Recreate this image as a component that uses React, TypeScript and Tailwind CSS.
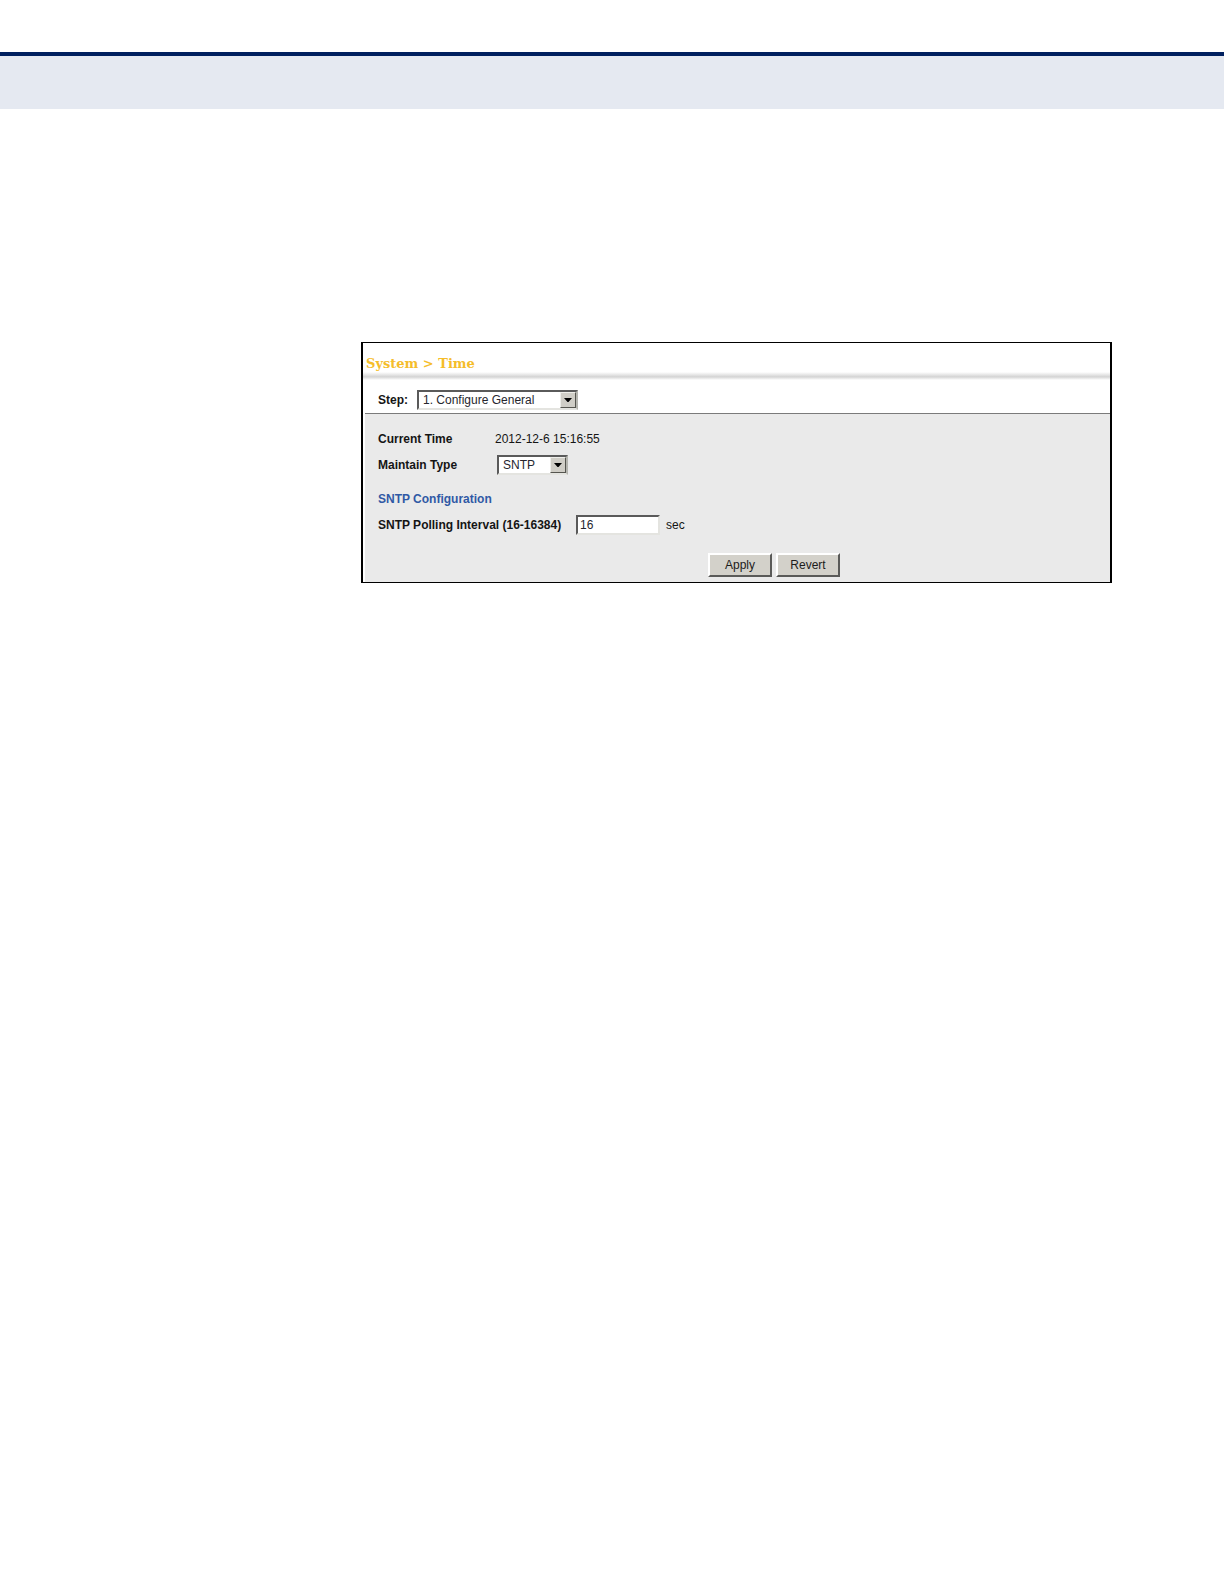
import type { ReactNode } from "react";

type ClassicSelectProps = {
  id: string;
  widthClass: string;
  options: string[];
};

function ClassicSelect({ id, widthClass, options }: ClassicSelectProps) {
  return (
    <div
      className={`relative h-5 border-2 border-t-[#5a5a5a] border-l-[#5a5a5a] border-r-[#b4b4ae] border-b-[#e4e4e0] bg-white ${widthClass}`}
    >
      <select
        id={id}
        className="block h-full w-full appearance-none bg-transparent pl-1 text-[12px] leading-4 text-[#26262e] outline-none"
      >
        {options.map((option) => (
          <option key={option}>{option}</option>
        ))}
      </select>
      <span className="pointer-events-none absolute inset-y-0 right-0 flex w-4 items-center justify-center border border-t-[#eeeeea] border-l-[#eeeeea] border-r-[#55554f] border-b-[#55554f] bg-[#cfcdc6]">
        <svg width="8" height="4" viewBox="0 0 8 4" aria-hidden="true">
          <path d="M0 0h8L4.5 4h-1z" fill="#000" />
        </svg>
      </span>
    </div>
  );
}

function ClassicButton({ children }: { children: ReactNode }) {
  return (
    <button
      type="button"
      className="h-6 w-16 border-2 border-t-white border-l-white border-r-[#5a5a58] border-b-[#5a5a58] bg-[#d3d1ca] text-[12px] leading-4 text-[#1c1c1c]"
    >
      {children}
    </button>
  );
}

export default function App() {
  return (
    <div className="min-h-screen bg-white font-['Liberation_Sans',Arial,sans-serif] text-[12px] leading-4 text-[#151515]">
      <header className="pt-[52px]">
        <div className="h-[57px] border-t-4 border-[#00205f] bg-[#e5e9f1]" />
      </header>

      <main className="mt-[233px] mr-28 ml-[361px] border-x-2 border-y border-black bg-white">
        <h1 className="h-[29px] pt-[13px] pl-[3px] font-['DejaVu_Serif',serif] text-[13px] leading-4 font-bold text-[#f5bd2a]">
          System &gt; Time
        </h1>
        <div className="h-2 bg-linear-to-b from-white via-[#d4d4d4] via-60% to-white" />

        <form onSubmit={(event) => event.preventDefault()}>
          <div className="ml-0.5 flex h-[34px] items-center gap-[9px] border-b border-[#7b7b7b] pt-[7px] pl-[13px]">
            <label htmlFor="step" className="font-bold">
              Step:
            </label>
            <ClassicSelect id="step" widthClass="w-[161px]" options={["1. Configure General"]} />
          </div>

          <div className="ml-0.5 bg-[#eaeaea] pt-3 pb-[5px] pl-[13px]">
            <div className="flex h-[26px] items-center">
              <span className="w-[117px] font-bold">Current Time</span>
              <span>2012-12-6 15:16:55</span>
            </div>
            <div className="flex h-[26px] items-center">
              <label htmlFor="maintain-type" className="w-[119px] font-bold">
                Maintain Type
              </label>
              <ClassicSelect id="maintain-type" widthClass="w-[71px]" options={["SNTP"]} />
            </div>

            <h2 className="mt-2 flex h-[26px] items-center font-bold text-[#3059a5]">
              SNTP Configuration
            </h2>
            <div className="flex h-[26px] items-center">
              <label htmlFor="polling-interval" className="w-[198px] font-bold">
                SNTP Polling Interval (16-16384)
              </label>
              <input
                id="polling-interval"
                type="text"
                defaultValue="16"
                className="h-5 w-[84px] border-2 border-t-[#5a5a5a] border-l-[#5a5a5a] border-r-[#e4e4e0] border-b-[#e4e4e0] bg-white pl-0.5 text-[12px] leading-4 text-[#26262e] outline-none"
              />
              <span className="ml-1.5">sec</span>
            </div>

            <div className="mt-[15px] flex justify-center gap-1 pl-15">
              <ClassicButton>Apply</ClassicButton>
              <ClassicButton>Revert</ClassicButton>
            </div>
          </div>
        </form>
      </main>
    </div>
  );
}
